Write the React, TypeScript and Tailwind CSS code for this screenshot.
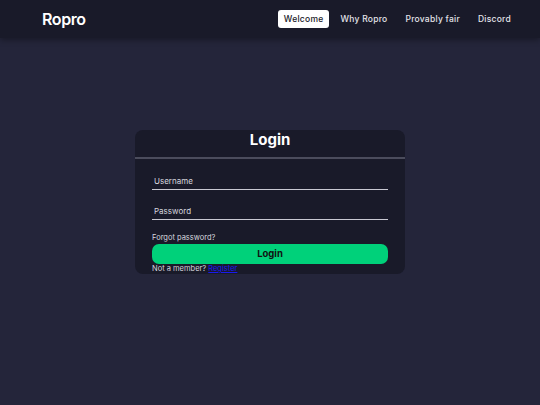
import { useState } from 'react';

const navItems = ['Welcome', 'Why Ropro', 'Provably fair', 'Discord'];

export default function App() {
    const [active, setActive] = useState('Welcome');
    const [username, setUsername] = useState('');
    const [password, setPassword] = useState('');

    return (
        <div
            className="min-h-screen bg-[#24253a] text-white"
            style={{ fontFamily: 'Inter, "Noto Sans", sans-serif' }}
        >
            {/* Header */}
            <header className="h-[38px] bg-[#191a29] shadow-[0_2px_6px_rgba(0,0,0,0.35)] flex items-center justify-between pl-[42px] pr-[22px]">
                <span className="text-[16px] font-semibold tracking-tight">Ropro</span>
                <nav className="flex items-center gap-[4px]">
                    {navItems.map((item) => (
                        <button
                            key={item}
                            onClick={() => setActive(item)}
                            className={
                                active === item
                                    ? 'h-[18px] px-[6px] rounded-[3px] bg-white text-[#191a29] text-[8.5px] font-medium tracking-[0.03em]'
                                    : 'h-[18px] px-[7px] text-[#e4e4ea] text-[8.5px] font-medium tracking-[0.03em]'
                            }
                        >
                            {item}
                        </button>
                    ))}
                </nav>
            </header>

            {/* Login card */}
            <main className="flex justify-center pt-[92px]">
                <div className="w-[270px] bg-[#191a29] rounded-[8px]">
                    <h1 className="text-center text-[15px] font-bold h-[27px] leading-[20px]">Login</h1>
                    <div className="h-[2px] bg-[#4b4c5c]" />
                    <form className="px-[17px] pt-[14px] flex flex-col" onSubmit={(e) => e.preventDefault()}>
                        <input
                            value={username}
                            onChange={(e) => setUsername(e.target.value)}
                            placeholder="Username"
                            className="h-[17px] bg-transparent border-b-[1.5px] border-[#c9c9d2] px-[2px] text-[8px] text-white placeholder:text-[#d6d6de] outline-none"
                        />
                        <input
                            type="password"
                            value={password}
                            onChange={(e) => setPassword(e.target.value)}
                            placeholder="Password"
                            className="mt-[13px] h-[17px] bg-transparent border-b-[1.5px] border-[#c9c9d2] px-[2px] text-[8px] text-white placeholder:text-[#d6d6de] outline-none"
                        />
                        <a className="mt-[13px] text-[7.5px] text-[#d6d6de] leading-[10px]">Forgot password?</a>
                        <button className="mt-[1px] h-[20px] rounded-[7px] bg-[#00d17a] text-[#111] text-[9.5px] font-bold">
                            Login
                        </button>
                        <p className="text-[7.5px] text-[#d6d6de] leading-[10px]">
                            Not a member? <a className="text-[#1a1aee] underline">Register</a>
                        </p>
                    </form>
                </div>
            </main>
        </div>
    );
}
